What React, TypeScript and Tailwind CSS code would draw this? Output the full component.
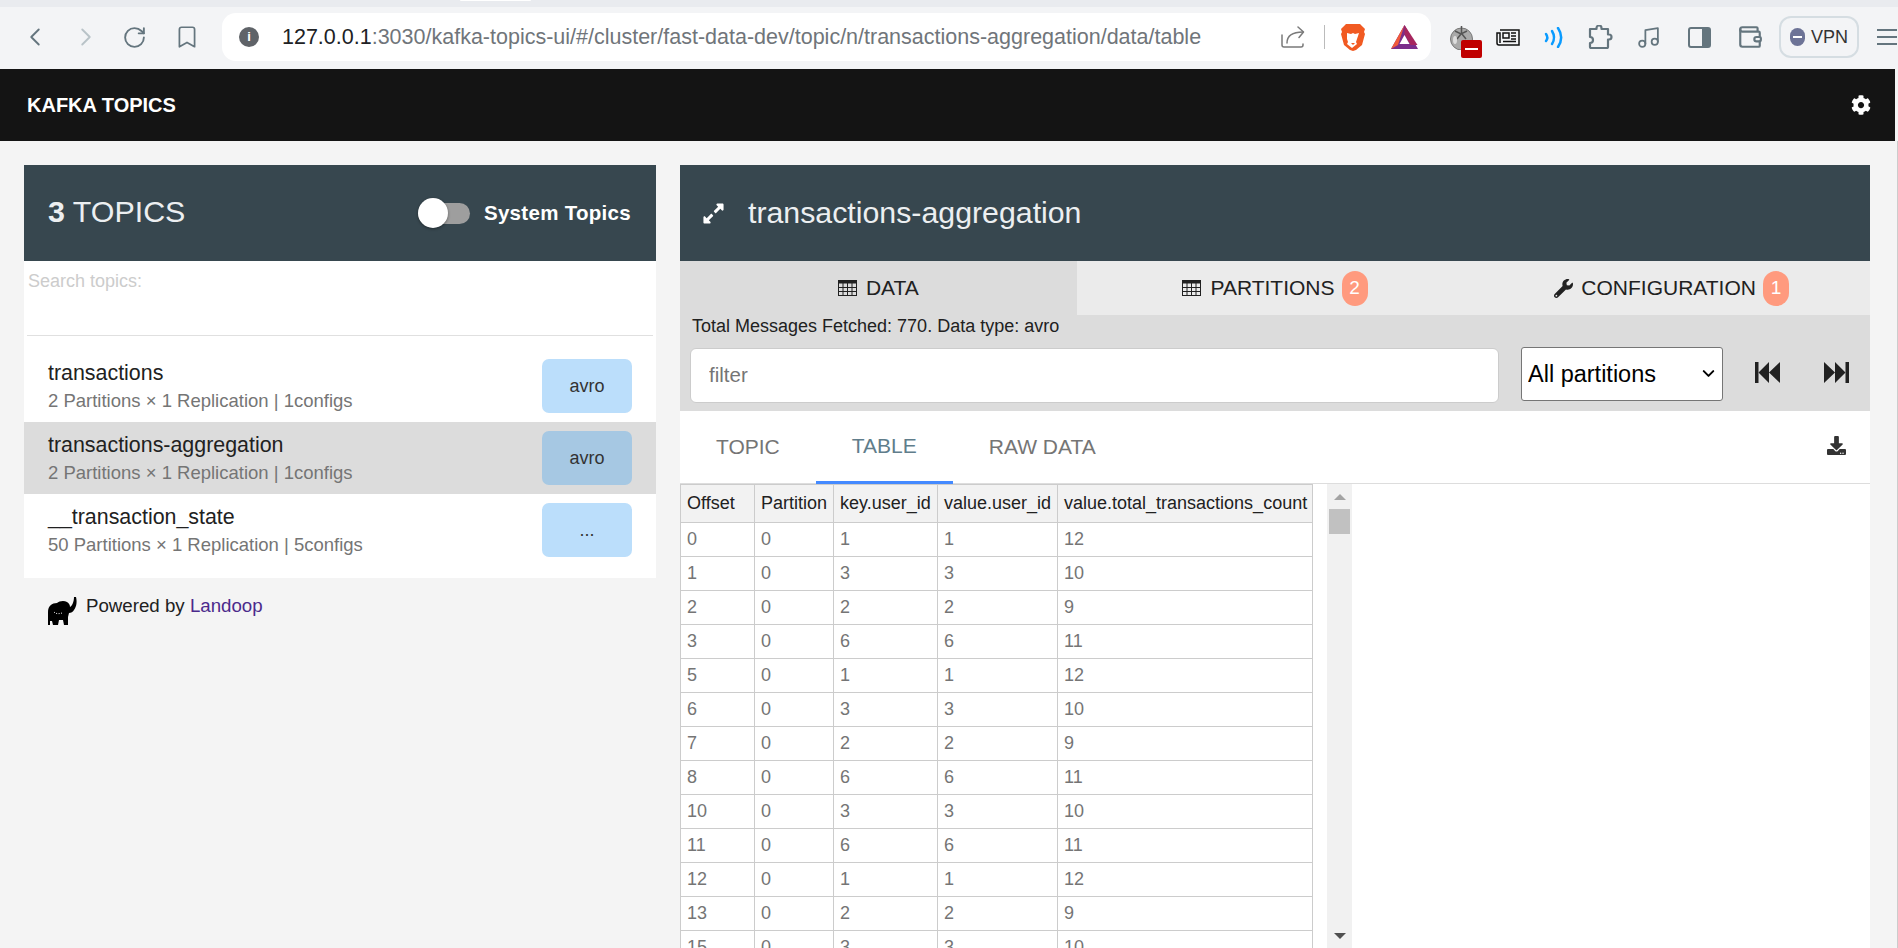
import {
  Bookmark,
  ChevronDown,
  ChevronLeft,
  ChevronRight,
  Music,
  RotateCw,
  Wallet,
} from "lucide-react";
import { FaCog, FaDownload, FaExpandAlt, FaWrench } from "react-icons/fa";

const TOPICS = [
  { name: "transactions", info: "2 Partitions × 1 Replication | 1configs", tag: "avro" },
  { name: "transactions-aggregation", info: "2 Partitions × 1 Replication | 1configs", tag: "avro", active: true },
  { name: "__transaction_state", info: "50 Partitions × 1 Replication | 5configs", tag: "..." },
];

const ROWS = [
  [0, 1, 12],
  [1, 3, 10],
  [2, 2, 9],
  [3, 6, 11],
  [5, 1, 12],
  [6, 3, 10],
  [7, 2, 9],
  [8, 6, 11],
  [10, 3, 10],
  [11, 6, 11],
  [12, 1, 12],
  [13, 2, 9],
  [15, 3, 10],
];

function BraveIcon() {
  return (
    <svg viewBox="0 0 24 28" className="w-[24px] h-[28px]">
      <path d="M5 1h14l3 3 2 2-1 3 1 2-3 11-6 5-3 1-3-1-6-5L0 11l1-2-1-3 2-2z" fill="#f15a22" />
      <path d="M6 10l4 1 2-1 2 1 4-1-2 6-1 3 1 2-5 4-5-4 1-2-1-3z" fill="#fff" />
      <path d="M10 20h4l-2 2z" fill="#f15a22" />
    </svg>
  );
}

function BatIcon() {
  return (
    <svg viewBox="0 0 27 24" className="w-[27px] h-[24px]">
      <path d="M13.5 0L27 24H0z" fill="#7b2d8b" />
      <path d="M13.5 0L0 24l7-4z" fill="#f15a3a" />
      <path d="M13.5 0v9l6 11h7z" fill="#a6265e" />
      <path d="M13.5 10l5 9h-10z" fill="#fff" />
    </svg>
  );
}

function TomatoIcon() {
  return (
    <span className="relative block w-[25px] h-[25px]">
      <svg viewBox="0 0 25 25" className="w-[25px] h-[25px]">
        <circle cx="12.5" cy="14" r="11" fill="#a9a9a9" stroke="#777" strokeWidth="1" />
        <path d="M12.5 1v7M6 6l6 3 6-3M12 9l-4 5M13 9l4 5" stroke="#555" strokeWidth="1.5" fill="none" />
        <ellipse cx="6" cy="15" rx="2" ry="4" fill="#ddd" />
      </svg>
      <span className="absolute left-[12px] top-[15px] w-[21px] h-[18px] rounded-[2px] bg-[#c00000] flex items-center justify-center">
        <span className="w-[13px] h-[2px] bg-white" />
      </span>
    </span>
  );
}

function NewsIcon() {
  return (
    <svg viewBox="0 0 24 17" className="w-[24px] h-[17px]" fill="none" stroke="#111" strokeWidth="1.5">
      <path d="M4 1h19v15H3a2 2 0 0 1-2-2V4h3v10" />
      <rect x="7" y="4" width="6" height="5" />
      <path d="M15 4h5M15 7h5M15 10h5M7 12.5h13" />
    </svg>
  );
}

function WaveIcon() {
  return (
    <svg viewBox="0 0 20 21" className="w-[20px] h-[21px]" fill="none" stroke="#0a9bff" strokeLinecap="round">
      <path d="M2 7c1.500 2 1.500 5 0 7" strokeWidth="2.500" />
      <path d="M8 4c2.500 4 2.500 9 0 13" strokeWidth="2.500" />
      <path d="M14 1c4 6 4 13 0 19" strokeWidth="2.500" />
    </svg>
  );
}

function PuzzleIcon() {
  return (
    <svg viewBox="0 0 25 24" className="w-[25px] h-[24px]" fill="none" stroke="#64757e" strokeWidth="2.200" strokeLinejoin="round">
      <path d="M2 4h6.500V3a2.500 2.500 0 0 1 5 0v1H20v5.500h1a2.500 2.500 0 0 1 0 5h-1V22a1 1 0 0 1-1 1H3a1 1 0 0 1-1-1v-4c2 0 3-1.500 3-3s-1-3-3-3z" />
    </svg>
  );
}

function SidebarIcon() {
  return (
    <svg viewBox="0 0 23 21" className="w-[23px] h-[21px]">
      <rect x="1" y="1" width="21" height="19" rx="2" fill="none" stroke="#64757e" strokeWidth="2" />
      <rect x="14" y="1" width="8" height="19" fill="#64757e" />
    </svg>
  );
}

function ShareIcon() {
  return (
    <svg viewBox="0 0 24 22" className="w-[24px] h-[22px]" fill="none" stroke="#7a7a7a" strokeWidth="1.500" strokeLinecap="round" strokeLinejoin="round">
      <path d="M1 9v10a2 2 0 0 0 2 2h17a2 2 0 0 0 2-2v-1" />
      <path d="M6 17c0-7 5-11 16-11" />
      <path d="M17 1l5.500 5-4.500 5.500" />
    </svg>
  );
}

function Elephant() {
  return (
    <svg viewBox="0 0 29 28" className="w-[29px] h-[28px] shrink-0">
      <path
        fill="#000"
        d="M28 0c1 4 1 9-2 13-1 2-3 3-5 3l-1 4v8h-4l-1-5h-4l-1 5H5l-1-4H2v4H0V15C0 9 4 6 9 6c2-2 7-3 10-1 2 1 3 3 3 5 2-1 4-5 4-10z"
      />
      <path d="M6 15c2 2 5 2 8 1" stroke="#fff" strokeDasharray="1 1.500" fill="none" />
    </svg>
  );
}

function TableIcon() {
  return (
    <svg viewBox="0 0 19 16" className="w-[19px] h-[16px]" fill="none" stroke="currentColor">
      <rect x="0.500" y="0.500" width="18" height="15" strokeWidth="1" />
      <path d="M0 2h19" strokeWidth="3" />
      <path d="M0 7.500h19M0 11.500h19M5 3v12M9.500 3v12M14 3v12" strokeWidth="1" />
    </svg>
  );
}

function SkipIcon({ flip }: { flip?: boolean }) {
  return (
    <svg viewBox="0 0 25 21" className={`w-[25px] h-[21px] ${flip ? "-scale-x-100" : ""}`} fill="#212121">
      <rect x="0" y="0" width="3.500" height="21" />
      <path d="M14 0v21L3.500 10.500zM25 0v21L14 10.500z" />
    </svg>
  );
}

function BrowserChrome() {
  return (
    <>
      <div className="h-[7px] bg-[#e9ebef] pl-[460px]">
        <div className="w-[71px] h-px bg-white rounded-b" />
      </div>
      <div className="h-[62px] bg-[#f3f4f6] flex items-center pb-[2px] text-[#64757e]">
        <ChevronLeft className="ml-[20px] w-[30px] h-[30px] shrink-0" strokeWidth={1.5} />
        <ChevronRight className="ml-[21px] w-[30px] h-[30px] shrink-0 text-[#b9c3c8]" strokeWidth={1.5} />
        <RotateCw className="ml-[21px] w-[25px] h-[25px] shrink-0" strokeWidth={1.8} />
        <Bookmark className="ml-[27px] w-[26px] h-[26px] shrink-0" strokeWidth={1.6} />
        <div className="ml-[22px] w-[1209px] h-[48px] shrink-0 rounded-[14px] bg-white flex items-center">
          <span className="ml-[17px] w-[20px] h-[20px] rounded-full bg-[#5f6368] text-white text-[13px] font-bold leading-[20px] text-center shrink-0">
            i
          </span>
          <div className="ml-[23px] flex-1 text-[21.5px] whitespace-nowrap text-[#70757a]">
            <span className="text-[#202124]">127.0.0.1</span>:3030/kafka-topics-ui/#/cluster/fast-data-dev/topic/n/transactions-aggregation/data/table
          </div>
          <ShareIcon />
          <span className="ml-[19px] w-px h-[24px] bg-[#bbb]" />
          <span className="ml-[16px]"><BraveIcon /></span>
          <span className="ml-[26px] mr-[13px]"><BatIcon /></span>
        </div>
        <span className="ml-[18px]"><TomatoIcon /></span>
        <span className="ml-[22px]"><NewsIcon /></span>
        <span className="ml-[24px]"><WaveIcon /></span>
        <span className="ml-[24px]"><PuzzleIcon /></span>
        <Music className="ml-[23px] w-[25px] h-[25px] shrink-0" strokeWidth={1.7} />
        <span className="ml-[27px]"><SidebarIcon /></span>
        <Wallet className="ml-[26px] w-[26px] h-[26px] shrink-0" strokeWidth={2} />
        <div className="ml-[16px] w-[80px] h-[42px] shrink-0 rounded-[12px] border-2 border-[#d5dde2] flex items-center pl-[9px] gap-[6px]">
          <span className="w-[15px] h-[18px] rounded-full bg-[#6d7396] flex items-center justify-center">
            <span className="w-[9px] h-[2px] bg-white" />
          </span>
          <span className="text-[18px] text-[#333]">VPN</span>
        </div>
        <div className="ml-[18px] w-[20px] flex flex-col gap-[5px] shrink-0">
          <span className="h-[2px] bg-[#64757e]" />
          <span className="h-[2px] bg-[#64757e]" />
          <span className="h-[2px] bg-[#64757e]" />
        </div>
      </div>
    </>
  );
}

function TopicsPanel() {
  return (
    <div className="w-[632px] shrink-0">
      <div className="h-[96px] bg-[#37474f] flex items-center pl-[24px] pr-[25px] text-white">
        <div className="text-[30.4px] text-[#eceff1] pb-[2px]">
          <span className="font-bold">3</span> TOPICS
        </div>
        <div className="ml-auto relative w-[52px] h-[21px] rounded-full bg-[#9e9e9e] mt-[1px]">
          <span className="absolute left-0 top-[-5px] w-[30px] h-[30px] rounded-full bg-white shadow-[0_1px_3px_rgba(0,0,0,0.4)]" />
        </div>
        <span className="ml-[14px] text-[20.5px] font-bold tracking-[0.3px]">System Topics</span>
      </div>
      <div className="bg-white pb-[12px]">
        <div className="h-[74px] px-[4px]">
          <div className="pt-[7px] text-[18px] text-[#ccc]">Search topics:</div>
        </div>
        <div className="mx-[3px] h-px bg-[#e0e0e0]" />
        <div className="pt-[14px]">
          {TOPICS.map((topic) => (
            <div
              key={topic.name}
              className={`h-[72px] flex items-center pl-[24px] pr-[24px] ${topic.active ? "bg-[#dcdcdc]" : "bg-white"}`}
            >
              <div>
                <div className="text-[21.4px] leading-[28px] text-[#212121]">{topic.name}</div>
                <div className="mt-[2px] text-[18.5px] leading-[24px] text-[#757575]">{topic.info}</div>
              </div>
              <div
                className={`ml-auto w-[90px] h-[54px] rounded-[7px] flex items-center justify-center text-[18px] text-[#333] ${topic.active ? "bg-[#a6c8e3]" : "bg-[#bbdefb]"}`}
              >
                {topic.tag}
              </div>
            </div>
          ))}
        </div>
      </div>
      <div className="mt-[19px] pl-[24px] flex items-start gap-[9px]">
        <Elephant />
        <div className="-mt-[1px] text-[18.7px] leading-[20px] text-[#212121]">
          Powered by <span className="text-[#4b2a8c]">Landoop</span>
        </div>
      </div>
    </div>
  );
}

function TopicHeader() {
  return (
    <div className="h-[96px] bg-[#37474f] flex items-center pl-[22px] text-[#eceff1]">
      <FaExpandAlt className="w-[23px] h-[23px] text-white" />
      <span className="ml-[23px] text-[30.3px]">transactions-aggregation</span>
    </div>
  );
}

function Badge({ value }: { value: number }) {
  return (
    <span className="ml-[7px] w-[26px] h-[35px] rounded-full bg-[#ff9a7e] text-white text-[19px] flex items-center justify-center">
      {value}
    </span>
  );
}

function Tabs() {
  return (
    <div className="h-[54px] grid grid-cols-3 bg-[#ebebeb] text-[21px] text-[#212121]">
      <div className="bg-[#dcdcdc] flex items-center justify-center gap-[9px]">
        <TableIcon />
        DATA
      </div>
      <div className="flex items-center justify-center gap-[9px]">
        <TableIcon />
        <span className="flex items-center">
          PARTITIONS
          <Badge value={2} />
        </span>
      </div>
      <div className="flex items-center justify-center gap-[8px]">
        <FaWrench className="w-[19px] h-[19px]" />
        <span className="flex items-center">
          CONFIGURATION
          <Badge value={1} />
        </span>
      </div>
    </div>
  );
}

function Toolbar() {
  return (
    <div className="h-[96px] bg-[#dcdcdc] pl-[10px]">
      <div className="h-[33px] pl-[2px] pt-[1px] text-[18px] leading-[20px] text-[#212121]">
        Total Messages Fetched: 770. Data type: avro
      </div>
      <div className="flex items-start">
        <input
          placeholder="filter"
          className="w-[809px] h-[55px] rounded-[6px] bg-white border border-[#ccc] pl-[18px] pb-[2px] text-[20.5px] text-[#212121] placeholder:text-[#757575] outline-none"
        />
        <div className="relative ml-[22px] -mt-[1px]">
          <select className="block appearance-none w-[202px] h-[54px] rounded-[3px] bg-white border border-[#767676] pl-[6px] pt-[2px] text-[23.5px] text-black outline-none">
            <option>All partitions</option>
          </select>
          <ChevronDown className="absolute right-[5px] top-[17px] w-[19px] h-[19px] text-black pointer-events-none" strokeWidth={2.5} />
        </div>
        <span className="ml-[32px] mt-[14px]"><SkipIcon /></span>
        <span className="ml-[44px] mt-[14px]"><SkipIcon flip /></span>
      </div>
    </div>
  );
}

function SubTabs() {
  return (
    <div className="h-[73px] bg-white flex border-b border-[#ddd] text-[21px]">
      <div className="h-full px-[36px] flex items-center text-[#757575]">TOPIC</div>
      <div className="h-[73px] px-[36px] flex items-center text-[#607d8b] border-b-[3px] border-[#448aff]">TABLE</div>
      <div className="h-full px-[36px] flex items-center text-[#757575]">RAW DATA</div>
      <FaDownload className="ml-auto mr-[24px] mt-[25px] w-[19px] h-[19px] text-[#333]" />
    </div>
  );
}

function DataTable() {
  const th = "h-[38px] px-[6px] border border-[#ccc] bg-[#f2f2f2] text-left font-normal text-[#212121]";
  const td = "h-[34px] px-[6px] border border-[#ccc] text-[#757575]";
  return (
    <div className="h-[464px] overflow-hidden bg-white flex">
      <table className="self-start border-collapse text-[18px] w-[633px] table-fixed">
        <thead>
          <tr>
            <th className={`${th} w-[74px]`}>Offset</th>
            <th className={`${th} w-[79px]`}>Partition</th>
            <th className={`${th} w-[104px]`}>key.user_id</th>
            <th className={`${th} w-[120px]`}>value.user_id</th>
            <th className={`${th} whitespace-nowrap`}>value.total_transactions_count</th>
          </tr>
        </thead>
        <tbody>
          {ROWS.map(([offset, user, total]) => (
            <tr key={offset}>
              <td className={td}>{offset}</td>
              <td className={td}>0</td>
              <td className={td}>{user}</td>
              <td className={td}>{user}</td>
              <td className={td}>{total}</td>
            </tr>
          ))}
        </tbody>
      </table>
      <div className="ml-[14px] w-[25px] h-full bg-[#f1f1f1] flex flex-col items-center">
        <span className="mt-[10px] w-0 h-0 border-x-[6px] border-x-transparent border-b-[6px] border-b-[#a3a3a3]" />
        <span className="mt-[9px] w-[21px] h-[25px] bg-[#c1c1c1]" />
        <span className="mt-auto mb-[9px] w-0 h-0 border-x-[6px] border-x-transparent border-t-[6px] border-t-[#505050]" />
      </div>
    </div>
  );
}

export default function App() {
  return (
    <div className="h-[948px] overflow-hidden bg-[#f4f4f4] font-['Liberation_Sans',Arial,sans-serif]">
      <BrowserChrome />
      <div className="h-[72px] mr-[3px] bg-[#141414] flex items-center pl-[27px] pr-[24px] text-white">
        <span className="text-[20px] font-bold">KAFKA TOPICS</span>
        <FaCog className="ml-auto w-[20px] h-[20px]" />
      </div>
      <div className="h-[807px] border-r border-[#ccc] pt-[24px] pl-[24px] flex gap-[24px]">
        <TopicsPanel />
        <div className="w-[1190px] shrink-0">
          <TopicHeader />
          <Tabs />
          <Toolbar />
          <SubTabs />
          <DataTable />
        </div>
      </div>
    </div>
  );
}
